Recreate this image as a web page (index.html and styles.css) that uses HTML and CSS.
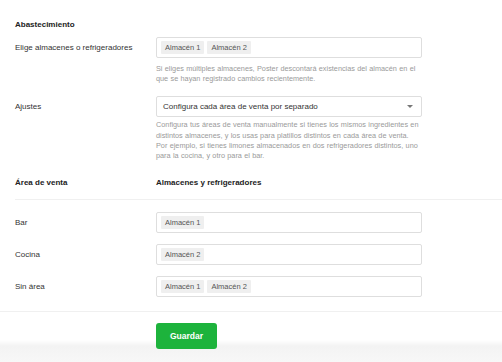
FILE: index.html
```html
<!DOCTYPE html>
<html lang="es">
<head>
  <meta charset="UTF-8" />
  <title>Abastecimiento</title>
  <link rel="stylesheet" href="styles.css">
</head>
<body>
  <div class="page">
    <h2 class="section-title">Abastecimiento</h2>

    <div class="field">
      <div class="field-label">Elige almacenes o refrigeradores</div>
      <div class="field-control">
        <div class="tag-input">
          <span class="tag">Almacén 1</span>
          <span class="tag">Almacén 2</span>
        </div>
        <p class="help">Si eliges múltiples almacenes, Poster descontará existencias del almacén en el que se hayan registrado cambios recientemente.</p>
      </div>
    </div>

    <div class="field field-settings">
      <div class="field-label">Ajustes</div>
      <div class="field-control">
        <div class="select">
          <span>Configura cada área de venta por separado</span>
          <span class="caret"></span>
        </div>
        <p class="help help-tight">Configura tus áreas de venta manualmente si tienes los mismos ingredientes en distintos almacenes, y los usas para platillos distintos en cada área de venta. Por ejemplo, si tienes limones almacenados en dos refrigeradores distintos, uno para la cocina, y otro para el bar.</p>
      </div>
    </div>

    <div class="table-head">
      <div class="field-label">Área de venta</div>
      <div class="field-control">Almacenes y refrigeradores</div>
    </div>

    <div class="area-rows">
      <div class="field">
        <div class="field-label">Bar</div>
        <div class="field-control">
          <div class="tag-input"><span class="tag">Almacén 1</span></div>
        </div>
      </div>
      <div class="field">
        <div class="field-label">Cocina</div>
        <div class="field-control">
          <div class="tag-input"><span class="tag">Almacén 2</span></div>
        </div>
      </div>
      <div class="field">
        <div class="field-label">Sin área</div>
        <div class="field-control">
          <div class="tag-input">
            <span class="tag">Almacén 1</span>
            <span class="tag">Almacén 2</span>
          </div>
        </div>
      </div>
    </div>
  </div>

  <div class="actions">
    <button class="btn-save">Guardar</button>
  </div>
</body>
</html>
```

FILE: styles.css
```css
body {
  font-family: 'Liberation Sans', Arial, sans-serif;
  font-size: 8px;
  color: #333;
  margin: 0;
  background: linear-gradient(to bottom, #fff 0, #fff 340px, #f3f3f3 346px, #f7f7f7 100%);
  min-height: 362px;
}

.page {
  padding: 20px 80px 0 15px;
}

.section-title {
  font-size: 8px;
  line-height: 10px;
  font-weight: 700;
  color: #222;
  margin: 0 0 7px;
}

.field {
  display: flex;
  align-items: flex-start;
}

.field-label {
  width: 141px;
  flex-shrink: 0;
  line-height: 21px;
}

.field-control {
  flex: 1;
}

.tag-input {
  box-sizing: border-box;
  height: 21px;
  border: 1px solid #dedede;
  border-radius: 2px;
  padding: 3px 4px;
  display: flex;
  gap: 3px;
}

.tag {
  background-color: #efefef;
  color: #555;
  font-size: 7.5px;
  line-height: 13px;
  padding: 0 4px;
  border-radius: 1px;
}

.help {
  margin: 6px 0 0;
  font-size: 7.3px;
  word-spacing: 0.3px;
  line-height: 10.2px;
  color: #9a9a9a;
}

.help-tight {
  margin-top: 3px;
}

.field-settings {
  margin-top: 12px;
}

.select {
  box-sizing: border-box;
  height: 21px;
  border: 1px solid #dedede;
  border-radius: 2px;
  padding: 0 8px 0 6px;
  display: flex;
  align-items: center;
  justify-content: space-between;
  color: #333;
}

.caret {
  width: 0;
  height: 0;
  border-left: 3px solid transparent;
  border-right: 3px solid transparent;
  border-top: 3px solid #777;
}

.table-head {
  display: flex;
  margin-top: 17px;
  margin-right: -80px;
  padding-bottom: 11px;
  border-bottom: 1.5px solid #f0f0f0;
  font-weight: 700;
  color: #222;
  line-height: 10px;
}

.table-head .field-label {
  line-height: 10px;
}

.area-rows {
  display: flex;
  flex-direction: column;
  gap: 11px;
  padding-top: 12px;
}

.actions {
  margin-top: 14px;
  border-top: 1.5px solid #f0f0f0;
  padding: 11px 0 0 156px;
}

.btn-save {
  font-family: 'Liberation Sans', Arial, sans-serif;
  font-size: 8.5px;
  font-weight: 700;
  color: #fff;
  background-color: #1db33c;
  border: none;
  border-radius: 3px;
  width: 61px;
  height: 26px;
  cursor: pointer;
}
```
